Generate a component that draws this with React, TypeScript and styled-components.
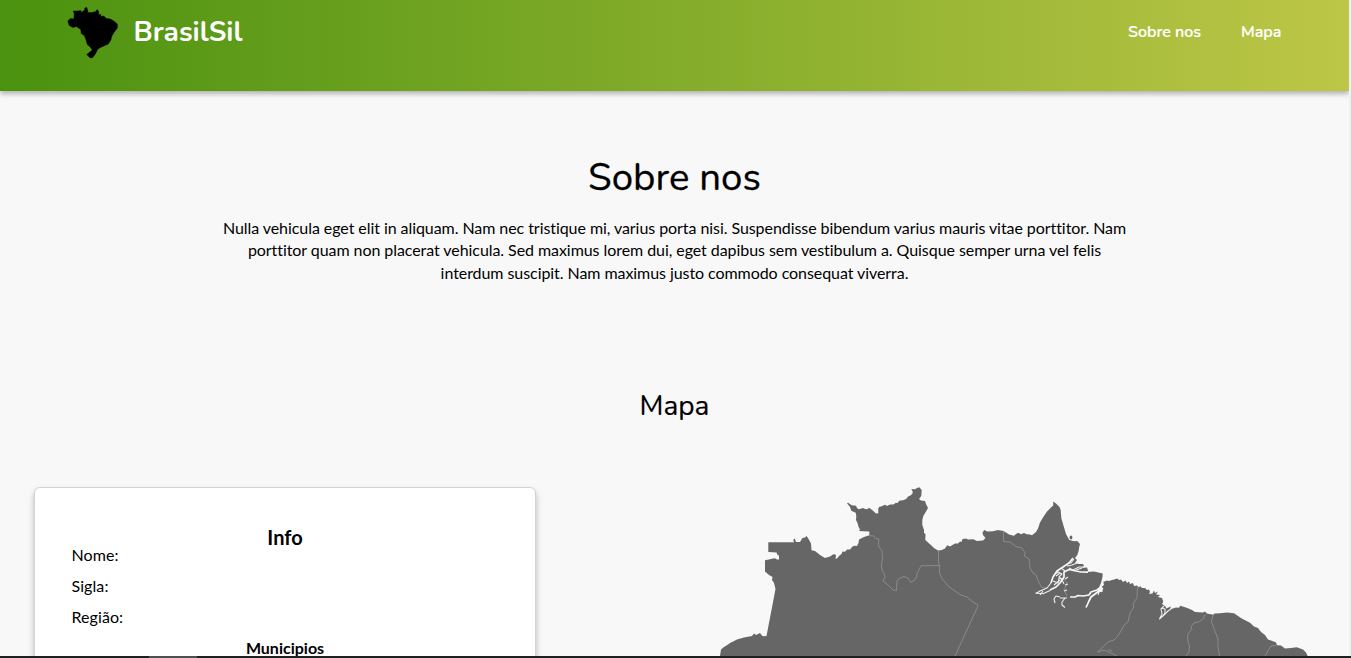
import React from "react";
import styled, { createGlobalStyle } from "styled-components";

const GlobalStyle = createGlobalStyle`
  * { box-sizing: border-box; }
  html, body { margin: 0; padding: 0; overflow: hidden; background: #f0f0f0; }
  h1, h2, h3, h4, p { margin: 0; }
`;

const titleFont = `Nunito, "Noto Sans", sans-serif`;

const Viewport = styled.div`
  height: 658px;
  width: 1351px;
  display: flex;
  flex-direction: column;
  overflow: hidden;
  font-family: Lato, sans-serif;
  color: #000;
`;

const Page = styled.div`
  width: 1349px;
  height: 656px;
  overflow: hidden;
  background: #f8f8f8;
`;

const Header = styled.header`
  height: 91px;
  padding: 6px 68px 0 66px;
  display: flex;
  align-items: flex-start;
  justify-content: space-between;
  background: linear-gradient(to right, #4a920f, #bdc646);
  box-shadow: 0 3px 5px rgba(0, 0, 0, 0.28);
  color: #fff;
  font-family: ${titleFont};
`;

const Brand = styled.div`
  display: flex;
  align-items: flex-start;
  gap: 13.5px;
`;

const BrandName = styled.span`
  font-size: 28px;
  font-weight: 700;
  line-height: 52px;
`;

const Nav = styled.nav`
  display: flex;
  gap: 40px;
`;

const NavLink = styled.a<{ $width: number }>`
  width: ${(p) => p.$width}px;
  font-size: 16px;
  font-weight: 600;
  line-height: 52px;
  white-space: nowrap;
  -webkit-text-stroke: 0.2px #fff;
`;

const About = styled.section`
  padding-top: 59px;
  display: flex;
  flex-direction: column;
  align-items: center;
  text-align: center;
`;

const AboutTitle = styled.h1`
  font-family: ${titleFont};
  font-size: 38.4px;
  font-weight: 400;
  line-height: 56px;
  -webkit-text-stroke: 0.3px #000;
`;

const AboutText = styled.p`
  margin-top: 11px;
  font-size: 16px;
  line-height: 22.4px;
  letter-spacing: -0.065px;
  white-space: nowrap;
`;

const MapTitle = styled.h2`
  margin-top: 102px;
  font-family: ${titleFont};
  font-size: 28px;
  font-weight: 400;
  line-height: 40px;
  text-align: center;
  -webkit-text-stroke: 0.2px #000;
`;

const Columns = styled.main`
  margin-top: 61px;
  padding: 0 20px 0 34px;
  display: flex;
  justify-content: space-between;
  align-items: flex-start;
`;

const Card = styled.section`
  width: 502px;
  height: 300px;
  padding: 36px 37px 0;
  background: #fff;
  border: 1px solid #d3d3d3;
  border-radius: 6px;
  box-shadow: 0 4px 6px rgba(0, 0, 0, 0.26);
`;

const CardTitle = styled.h3`
  font-size: 20px;
  font-weight: 700;
  line-height: 26px;
  text-align: center;
`;

const Field = styled.p`
  height: 31px;
  font-size: 16px;
  line-height: 10px;
  letter-spacing: 0.08px;
`;

const Fields = styled.div`
  margin-left: -0.5px;
`;

const CardSubtitle = styled.h4`
  font-size: 16px;
  font-weight: 700;
  line-height: 10px;
  text-align: center;
`;

const MapDrawing = styled.svg`
  display: block;
  width: 629px;
  height: 178px;
`;

const BottomStrip = styled.footer`
  height: 2px;
  background: linear-gradient(to right, #202020 149px, #4f4f4f 149px, #4f4f4f 197px, #202020 197px);
`;

const BrazilLogo = () => (
  <svg width="54" height="54" viewBox="66.2 6 54 54" aria-hidden="true">
    <path
      d="M68 21L70.5 18.5 74 19 74.5 14 73.5 11 78 11 81 10.5 81.5 12.5 85 10 85 8 87 7.5 88 11 88 12.5 92.5 12.5 96 11.5 97.5 9.5 99 12 98.5 14.5 101 14.5 101 16.5 104 16 106.5 18.5 110.5 19 114.5 21.5 117.5 24 117.5 28 114.5 32 112 36 111 40 108.5 44 104 46 99.5 48 97.5 50 95.5 54 93 57.5 90.5 58 87 54.5 90 52 92.5 50 90.5 47 87.5 44.5 86.5 40.5 84.5 35.5 81.5 33.5 81 29.5 76.5 26.5 73 27.5 69.5 25.5Z"
      fill="#000"
      stroke="#000"
      strokeWidth="0.5"
    />
  </svg>
);

const coast =
  "M720 670L720 656 721 649.5 724 647 728 644.5 730 643 737 639.5 744 637.5 752 636 754 633.5 756 635 758 634 760 633 761.5 635 763 636.3 766.5 636 775.5 589 774 583 772 580 772.5 577 769 575 765 571.5 765 560.3 770 559.3 773 558.5 775 558.2 777 559.5 779 559.5 779 555.5 777.5 555 776.5 552.5 768.3 552 768.3 542.2 794 542.3 793.2 540 794.7 538.6 796 542 800 542 802.5 538 805 537.5 806.5 536 808 538 811 543.5 811.5 550.2 815 551 820 555 825 558 830 556.5 833 554.5 835.5 554.3 836 556.5 835.3 558.7 837 558.5 839.5 555.5 841.5 554 842.5 551.5 845 551.7 847 549.5 850 549.5 852 547 854 545.7 857 546 858.5 543 859 539.5 864 537 869.3 535.3 869.3 531.5 859 531 860 529.5 858.5 526.7 857.5 523 856 520 856.3 516 855.7 512.7 851.3 510.7 850 507 847 503.3 848 502.7 851.7 505.3 856 505.7 857 508 858.7 509.3 863.3 508 865 509 867.3 509.3 869 507.7 873 510.7 876 513.5 878.3 513.3 878.2 509 879 507 881 506.5 885 504.7 887 506 890 504.5 893.3 504.5 896 502.7 897.5 503 899.3 500.7 904 500 906.7 498.5 908 496.5 910.5 495.5 912.7 493.3 912.5 491 911.3 489 915 489.2 917 488 919.3 487.3 921.7 490 921.3 496 919 499 921 500.5 925 501 926 504 928 508 926 511.5 923.3 516 922.3 520 922.3 525 924 530 924 533 925.5 534 925.3 540 928 542.5 931.7 545.7 934 548 938 550.5 941 550.2 944.7 548.8 947.3 545.3 950 546.5 953.3 544.5 955 543.5 958 543.5 960 541.5 961.7 541.7 962.5 539 966 538.5 968 539.5 973.3 539.3 977 541 983 540.5 985.5 538 983 535 982.5 532.5 984.3 530 987.3 531.5 993 531.3 998 530 1000 530.5 1003 530.7 1006 532.5 1009 534.5 1014 535.7 1016 534 1018.3 532.7 1021 534.3 1024 533 1026.7 534.3 1030 534.5 1032 535.3 1036 532 1038 528.5 1040 522.5 1043.3 517 1047 511.5 1053.3 505.3 1053.2 501.5 1056 503.5 1059.5 507 1060.7 510 1061.3 518 1063.3 525 1066 534 1069.3 540 1074 541.2 1077.3 541 1080 544 1079 548 1078.7 550.7 1077.3 555 1075 558 1077 560 1075 563 1079 564 1083 564 1084 566 1082 568 1087 567.5 1088 570.5 1087 572 1094 571.5 1102.7 573.5 1102.5 577 1101 583 1098 590 1097 593 1102.3 591.5 1103.3 588 1101.5 587 1104 585 1103.3 582 1107 580.5 1109 581 1112 580 1114 579.5 1117.3 578.5 1119 580 1121 579.5 1123 582 1125.5 580.5 1127 583 1129 581.5 1130 584 1133 583 1134 586 1137 585.5 1139 587.5 1140 586 1142 588 1145 588 1147 590 1149 589.5 1150 592 1149 594 1152.5 593.5 1154 590.5 1155 593 1158 591.5 1156 594.5 1160 595 1158 597 1162 598 1163.3 601.7 1162 604 1165.7 606.5 1166 608.5 1171 606.5 1170 609.5 1176 607.5 1179 607.8 1180.2 605.7 1186.7 607.7 1192 610 1195 612 1203 612.5 1205 611.5 1207 613.5 1213.3 614.7 1214.5 613.5 1220 613.3 1227 612.5 1234 613.2 1241.7 618.5 1250 622.7 1254 626.5 1258 628 1261 632 1265 635 1268 639.5 1271 640.5 1275.7 642.3 1277.3 645.3 1281 645.5 1285 648.5 1291 648 1296.7 647.3 1303 649.5 1306 652.5 1307.7 656 1308 670Z";

const borders = [
  "M869 535.5L874 536 875.5 538.5 879 539 878.5 543 879 547 882 551 882.5 559 881.5 564 881.7 569 884 573 885 577 883 581 888 585 893 590 896.5 590.5 897 581 899 578.5 904 576.5 908 578 910.5 582.3 915 580 916.5 577 917 573.5 921 565.8 939.3 565.5",
  "M938.5 550.5L938.5 561 939.3 565.5 939.5 573 942 578.5 948 586 955 591 961 595 967 597 973 602 977.5 604.5 978 606 955 656",
  "M1003.5 531V541.5L1010 542 1016 546.5 1022 548 1025 553 1024.5 556 1029 559 1030 568 1033 573 1036 575 1039 583 1042 587.5 1047 588",
  "M1137.5 587L1137 598 1133 604 1134 607 1130 613 1128 622 1124 625 1121 631 1117 637 1114 640 1108 642 1097.5 652",
  "M1098 652L1104 650 1111 653 1117 656M1108 650L1112 650.5",
  "M1205 614.5L1203 619 1198.5 622 1194 623 1191.5 626 1191 630 1187.5 635 1188 642 1189.5 646 1189 652 1186 656",
  "M1213.5 614.5L1211.3 621 1214.5 630 1218 639 1218 647 1219.5 656",
  "M1265 656L1269 649 1271 646 1277 645",
];

const wideChannels = [
  "M1073 558L1069 563 1063 567 1057 571 1053 577 1051 583",
  "M1050 590L1056 587 1060 583 1064 577 1064 572 1069 569.5 1076 571 1081 572 1088 572.2",
  "M1070 597L1075 597 1078 595.5 1083 596 1089 595 1091 592 1097 590 1101 587",
  "M1099 591L1091 597 1089 601 1086 607.5",
];

const channels = [
  "M1051 583L1047 588 1040 591 1036 593.5",
  "M1035.5 593L1043 593.7 1050 590.5",
  "M1055 574L1058 572 1062 574 1059 577 1062 580 1064 584",
  "M1053 581L1058 583 1059 578 1064 579M1040 595L1043 591",
  "M1056 576L1060 573M1054 585L1060 580M1061 568L1065 571",
  "M1068 563L1071 563 1074 559M1067 566L1072 565 1077 563",
  "M1069 568L1073 570 1079 567 1084 567M1076 570L1082 568",
  "M1055 603L1054 599 1056 596 1060 597",
  "M1060 598L1067 598M1065 598L1062 602 1062 605 1065 607.5",
  "M1065 579L1068 577M1065 585L1068 584M1067 590L1064 591",
  "M1099 592L1098 595M1101 588L1102 592",
  "M1164 606L1161 609 1162 614 1159.5 619 1165 614 1168 611 1171 609",
  "M1162 608L1165 609 1165 613 1163 616",
];

const BrazilMap = () => (
  <MapDrawing viewBox="700 487 629 178" role="img" aria-label="Mapa do Brasil">
    <path d={coast} fill="#666" />
    <ellipse cx="1071" cy="537.5" rx="1.4" ry="2.1" fill="#666" />
    <g fill="none" stroke="#959595" strokeWidth="0.75" strokeLinejoin="round">
      {borders.map((d) => <path key={d} d={d} />)}
      <path d="M1064 579L1067 583 1064 590 1067 596" />
    </g>
    <g fill="none" stroke="#f8f8f8" strokeWidth="1.7" strokeLinejoin="round">
      {wideChannels.map((d) => <path key={d} d={d} />)}
    </g>
    <g fill="none" stroke="#f0f0f0" strokeWidth="1.1" strokeLinejoin="round">
      {channels.map((d) => <path key={d} d={d} />)}
    </g>
  </MapDrawing>
);

export default function App() {
  return (
    <Viewport>
      <GlobalStyle />
      <Page>
        <Header>
          <Brand>
            <BrazilLogo />
            <BrandName>BrasilSil</BrandName>
          </Brand>
          <Nav>
            <NavLink $width={73}>Sobre nos</NavLink>
            <NavLink $width={40}>Mapa</NavLink>
          </Nav>
        </Header>
        <About>
          <AboutTitle>Sobre nos</AboutTitle>
          <AboutText>
            Nulla vehicula eget elit in aliquam. Nam nec tristique mi, varius porta nisi. Suspendisse bibendum varius mauris vitae porttitor. Nam
            <br />
            porttitor quam non placerat vehicula. Sed maximus lorem dui, eget dapibus sem vestibulum a. Quisque semper urna vel felis
            <br />
            interdum suscipit. Nam maximus justo commodo consequat viverra.
          </AboutText>
        </About>
        <MapTitle>Mapa</MapTitle>
        <Columns>
          <Card>
            <CardTitle>Info</CardTitle>
            <Fields>
              <Field>Nome:</Field>
              <Field>Sigla:</Field>
              <Field>Região:</Field>
            </Fields>
            <CardSubtitle>Municipios</CardSubtitle>
          </Card>
          <BrazilMap />
        </Columns>
      </Page>
      <BottomStrip />
    </Viewport>
  );
}
